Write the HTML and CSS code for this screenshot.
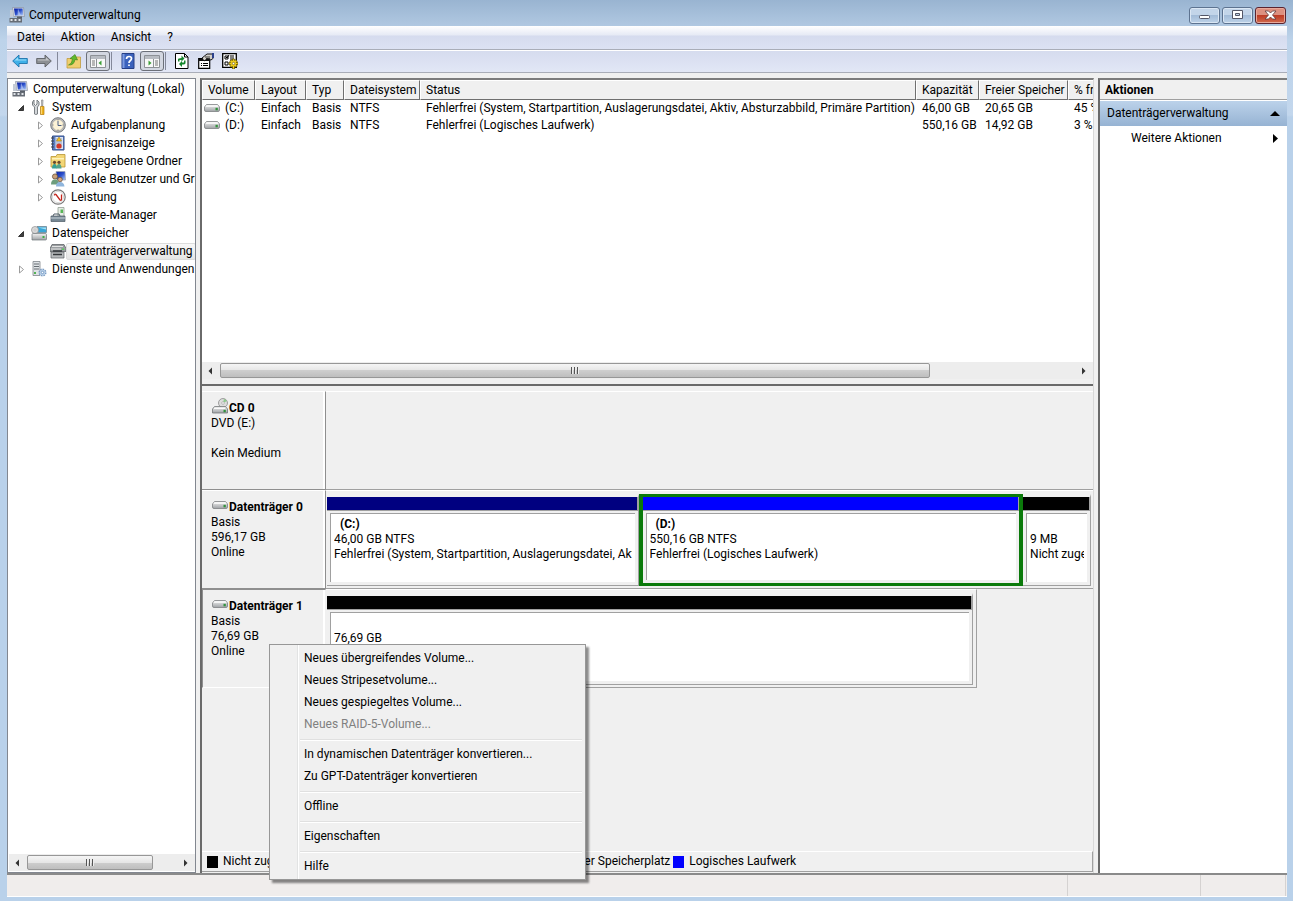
FILE: index.html
```html
<!DOCTYPE html>
<html lang="de">
<head>
    <meta charset="UTF-8">
    <meta name="viewport" content="width=device-width, initial-scale=1.0">
    <title>Computerverwaltung</title>
    <link rel="stylesheet" href="styles.css">
</head>
<body>
    <svg class="sprite" aria-hidden="true">
        <defs>
            <linearGradient id="gDisk" x1="0" y1="0" x2="0" y2="1">
                <stop offset="0" stop-color="#f2f2f2"/>
                <stop offset="1" stop-color="#9fa2a5"/>
            </linearGradient>
            <linearGradient id="gScreen" x1="0" y1="0" x2="1" y2="1">
                <stop offset="0" stop-color="#0a1fa0"/>
                <stop offset=".5" stop-color="#2c50cc"/>
                <stop offset="1" stop-color="#b9d4fa"/>
            </linearGradient>
        </defs>
        <symbol id="computer" viewBox="0 0 16 16">
            <path d="M3.500.5h11l1 9h-11z" fill="#d5dae3" stroke="#8b93a5" stroke-width=".7"/>
            <path d="M5 1.500h8.500l.8 7H6z" fill="url(#gScreen)"/>
            <path d="M9 1.500l3 7H8.500z" fill="#e4eeff" opacity=".5"/>
            <path d="M1 3h2.500l1 7H1z" fill="#c4cbd5"/>
            <path d="M.5 11h12.500v4.500H.5z" fill="#666c75"/>
            <path d="M1.500 12h2v2h-2zM5.500 12h2v2h-2zM9.500 12h2v2h-2z" fill="#dfe3e8"/>
            <path d="M8 9.500h5v1.500H8z" fill="#59606a"/>
        </symbol>
        <symbol id="tools" viewBox="0 0 16 16">
            <path d="M3 1v4l1.500 1.500L6 5V1l2 2v3L6.500 8v7q-2 1-3 0V8L1.500 6V3z" fill="#d4d7da" stroke="#6e7478" stroke-width=".9"/>
            <path d="M10.500 1h1.500l-.3 6h-1z" fill="#d0d0d0" stroke="#777" stroke-width=".6"/>
            <path d="M9.500 7.500h3.500v8H9.500z" fill="#f0b41c" stroke="#b37a0c" stroke-width=".7"/>
            <path d="M10.500 8v7" stroke="#ffe08a" stroke-width=".8"/>
        </symbol>
        <symbol id="clock" viewBox="0 0 16 16">
            <circle cx="8" cy="8" r="7.300" fill="#b9bbbe" stroke="#6d7073" stroke-width=".9"/>
            <circle cx="8" cy="8" r="5.600" fill="#fdf3d6" stroke="#8b8b8b" stroke-width=".4"/>
            <path d="M8 4v4.500h3.500" fill="none" stroke="#4a5f86" stroke-width="1"/>
            <path d="M8 2.500v1M8 12.500v1M2.500 8h1M12.500 8h1" stroke="#777"/>
        </symbol>
        <symbol id="events" viewBox="0 0 16 16">
            <path d="M2.500 1h11.500v14H2.500z" fill="#5b7fc4" stroke="#35508c"/>
            <path d="M5.500 2h7.500v12H5.500z" fill="#dfe6f5"/>
            <path d="M1 3h3M1 6h3M1 9h3M1 12h3" stroke="#444"/>
            <path d="M6 4h6M6 6h6M6 8h6M6 10h6M6 12h6" stroke="#8793a8" stroke-width=".8"/>
            <path d="M9 2l2.500 4h-5z" fill="#f2c227" stroke="#97700c" stroke-width=".5"/>
            <circle cx="9" cy="11" r="2.600" fill="#d43727"/>
        </symbol>
        <symbol id="folder" viewBox="0 0 16 16">
            <path d="M1 3.500h5l1-2h8v12.500H1z" fill="#f3d675" stroke="#b99534" stroke-width=".8"/>
            <path d="M2 5h12v1.500H2z" fill="#fff3bb"/>
            <circle cx="4.500" cy="9.300" r="1.600" fill="#6b4b2d"/>
            <circle cx="9" cy="9.300" r="1.600" fill="#6b4b2d"/>
            <path d="M2 15.500q0-4.500 2.500-4.500t2.500 4.500z" fill="#35a095"/>
            <path d="M6.500 15.500q0-4.500 2.500-4.500t2.500 4.500z" fill="#53a48b"/>
        </symbol>
        <symbol id="users" viewBox="0 0 16 16">
            <path d="M6 .5h9l.5 8.500H7z" fill="url(#gScreen)" stroke="#9ba2b0" stroke-width=".7"/>
            <circle cx="5" cy="5.500" r="2.600" fill="#c9a078" stroke="#5c4630" stroke-width=".7"/>
            <circle cx="10" cy="8.500" r="2.300" fill="#d5a57e" stroke="#5c4630" stroke-width=".7"/>
            <path d="M1 13.500q0-5 4-5t4 5z" fill="#6d9d7c"/>
            <path d="M6 15.500q0-4.500 4-4.500t4.500 4.500z" fill="#8fb5dc"/>
        </symbol>
        <symbol id="perf" viewBox="0 0 16 16">
            <circle cx="8" cy="8" r="7.200" fill="#fff" stroke="#777" stroke-width="1.200"/>
            <circle cx="8" cy="8" r="5.600" fill="#fff" stroke="#c0c0c0" stroke-width=".6"/>
            <path d="M4.500 6.500q0-2 1.500-1l4 5.500q1.500 1 1.500-1V5.500" fill="none" stroke="#c4251c" stroke-width="1.300"/>
        </symbol>
        <symbol id="devices" viewBox="0 0 16 16">
            <path d="M8 .5h6v9H8z" fill="#e5ece5" stroke="#93a093" stroke-width=".8"/>
            <path d="M10.500 2.500H13V6h-2.500z" fill="#58b657"/>
            <path d="M1 9h14v5.500H1z" fill="#778894" stroke="#4d5a64" stroke-width=".7"/>
            <path d="M3 9l1-2h5l1 2" fill="none" stroke="#4d5a64"/>
            <path d="M1 11h14" stroke="#c8d2d9"/>
        </symbol>
        <symbol id="storage" viewBox="0 0 16 16">
            <path d="M6 1.500h9.500v6H6z" fill="#39a6d8" stroke="#6d7d88" stroke-width=".7"/>
            <path d="M7 2.500h8v2z" fill="#a5e0f4"/>
            <circle cx="4" cy="5" r="3.500" fill="#dcdcdc" stroke="#8b8b8b" stroke-width=".7"/>
            <circle cx="4" cy="5" r="1" fill="#fff" stroke="#999" stroke-width=".5"/>
            <path d="M1 9.500q0-1 1-1h12q1.500 0 1.500 1v4.500q0 1-1 1H1z" fill="url(#gDisk)" stroke="#6f7579" stroke-width=".7"/>
            <path d="M11.500 11h2v2h-2z" fill="#3fae49"/>
        </symbol>
        <symbol id="diskmgmt" viewBox="0 0 16 16">
            <path d="M2 1.500h12l2 4v3H0v-3z" fill="#9a9ea1" stroke="#55595c" stroke-width=".7"/>
            <path d="M2 3.500h11M1 6h10" stroke="#e3e3e3"/>
            <path d="M1 9h13v6H1z" fill="#b8bbbd" stroke="#5a5e61" stroke-width=".7"/>
            <path d="M3 8h9M3 11.500h9" stroke="#35393c" stroke-width="1.500"/>
            <path d="M12 5.500h2v1.500h-2z" fill="#54d05a"/>
        </symbol>
        <symbol id="services" viewBox="0 0 16 16">
            <path d="M2 .5h7v14H2z" fill="#dfe3e6" stroke="#80878c" stroke-width=".8"/>
            <path d="M3 3h5M3 5.500h5M3 8h5" stroke="#666d73"/>
            <path d="M3 11h2v2H3z" fill="#53b255"/>
            <circle cx="11.500" cy="11.500" r="3" fill="#cfe0f3" stroke="#7b9dc4" stroke-width="2" stroke-dasharray="1.500 .8"/>
            <circle cx="11.500" cy="11.500" r="2.600" fill="#b9d0e8"/>
            <circle cx="11.500" cy="11.500" r="1.200" fill="#fff" stroke="#5583b8" stroke-width=".7"/>
        </symbol>
        <symbol id="drive" viewBox="0 0 16 8">
            <path d="M2.500.5h11l2 2.500v3q0 1.500-1.500 1.500H2Q.5 7.500.5 6V3z" fill="url(#gDisk)" stroke="#7d8083" stroke-width=".8"/>
            <path d="M2.800 1h10.400l1.500 2H1.300z" fill="#f5f5f5"/>
            <path d="M11.500 3.800h2.300v2.500h-2.300z" fill="#31923c"/>
        </symbol>
        <symbol id="cd" viewBox="0 0 16 16">
            <circle cx="11" cy="5" r="4.500" fill="#dcdcdc" stroke="#8c8c8c" stroke-width=".8"/>
            <path d="M11 5l1-4.300 3 2.300z" fill="#8ccb8b"/>
            <circle cx="11" cy="5" r="1.300" fill="#fff" stroke="#999" stroke-width=".6"/>
            <path d="M2.500 8.500h11l2 2.500v4H.5v-4z" fill="url(#gDisk)" stroke="#747779" stroke-width=".8"/>
            <path d="M2 10h11v1H2z" fill="#fafafa"/>
            <path d="M11.500 11.800h2.300v2.400h-2.300z" fill="#31923c"/>
        </symbol>
        <symbol id="back" viewBox="0 0 16 16">
            <path d="M.7 8L7 2v3.500h8.300v5H7V14z" fill="#3fb0e8" stroke="#1d74ad" stroke-width=".9"/>
            <path d="M2.500 7.600L6 4.200v2.300h8.300v1.100z" fill="#9adcf8"/>
        </symbol>
        <symbol id="forward" viewBox="0 0 16 16">
            <path d="M15.300 8L9 2v3.500H.7v5H9V14z" fill="#8c8f93" stroke="#5e6165" stroke-width=".9"/>
            <path d="M13.500 7.600L10 4.200v2.300H1.700v1.100z" fill="#c3c5c8"/>
        </symbol>
        <symbol id="up" viewBox="0 0 16 16">
            <path d="M1 5.500h5l1-1.500h7.500v11H1z" fill="#f0cf6e" stroke="#c09c40" stroke-width=".8"/>
            <path d="M2.500 12q3.500-1 4-6L4 5.500 9 1.500 11.500 7 9 6.500q-1 6-6.500 5.500z" fill="#5fb92e" stroke="#3b7c16" stroke-width=".6"/>
        </symbol>
        <symbol id="paneleft" viewBox="0 0 16 16">
            <path d="M.5 2.500h15v12H.5z" fill="#f8f8f8" stroke="#8d9196"/>
            <path d="M1 3h14v3H1z" fill="#b8bcc2"/>
            <path d="M6.500 6v8" stroke="#8d9196"/>
            <path d="M2 8h3M2 10h3M2 12h3" stroke="#777"/>
            <path d="M11.500 7.500v5L8.500 10z" fill="#3c9f37"/>
        </symbol>
        <symbol id="paneright" viewBox="0 0 16 16">
            <path d="M.5 2.500h15v12H.5z" fill="#f8f8f8" stroke="#8d9196"/>
            <path d="M1 3h14v3H1z" fill="#b8bcc2"/>
            <path d="M9.500 6v8" stroke="#8d9196"/>
            <path d="M11 8h3M11 10h3M11 12h3" stroke="#777"/>
            <path d="M4.500 7.500v5l3-2.500z" fill="#3c9f37"/>
        </symbol>
        <symbol id="help" viewBox="0 0 16 16">
            <path d="M2 .5h12v15H2z" fill="#3b62bd" stroke="#263f86"/>
            <path d="M2.500 1h2v14h-2z" fill="#7d9be0"/>
            <path d="M6.500 6q0-2.500 2.500-2.500t2.500 2q0 1.300-1.300 2.200Q9 8.500 9 10M9 11.500v1.500" fill="none" stroke="#fff" stroke-width="1.700"/>
        </symbol>
        <symbol id="refresh" viewBox="0 0 16 16">
            <path d="M1.500 .5h9L14 4v11.500H1.500z" fill="#fff" stroke="#000"/>
            <path d="M10.500.5V4H14" fill="none" stroke="#000"/>
            <path d="M4 8.500V6.500Q4 5 7.500 5V2.500l3 3-3 3V7H5.500v1.500zM11.500 7.500V10q0 1.500-3.500 1.500v2.500l-3-3 3-3V9.500h2v-2z" fill="#14862c"/>
        </symbol>
        <symbol id="props" viewBox="0 0 16 16">
            <path d="M.7 5.500h11v9.800H.7z" fill="#fff" stroke="#000" stroke-width="1.200"/>
            <path d="M1 6h10v2H1z" fill="#111"/>
            <path d="M3 10.500h1M3 12.500h1M5 10.500h5M5 12.500h5" stroke="#000"/>
            <path d="M4 5l5-4h6.500v4L13 7l-4-1-3 2z" fill="#d3d0ca" stroke="#000" stroke-width=".9"/>
            <path d="M7 4h5M8 5.500h4" stroke="#000" stroke-width=".7"/>
            <path d="M14 0h2v5h-2z" fill="#2c418c"/>
        </symbol>
        <symbol id="settings" viewBox="0 0 16 16">
            <path d="M.7.7h13.600v13.600H.7z" fill="#fff" stroke="#000" stroke-width="1.300"/>
            <path d="M3 3h3v3H3zM3 9h3v3H3z" fill="#fff" stroke="#000"/>
            <path d="M8 3h4M8 5h4M8 7h3M4 4l1 1 2-3" stroke="#000" fill="none"/>
            <path d="M10.500 6h2v1.500l1.500-.7 1.200 1.500-1 1.200h1.800v2h-1.800l1 1.500-1.200 1.200-1.500-.8V16h-2v-2.600l-1.500.8L7.800 13l1-1.500H7v-2h1.800l-1-1.200L9 6.800l1.500.7z" fill="#f0cf1c" stroke="#5c4e00" stroke-width=".7"/>
            <circle cx="11.500" cy="10.500" r="1.200" fill="#fff" stroke="#5c4e00" stroke-width=".6"/>
        </symbol>
        <symbol id="closed" viewBox="0 0 10 10">
            <path d="M2.500 2v7l4-3.500z" fill="#fff" stroke="#9b9b9b"/>
        </symbol>
        <symbol id="open" viewBox="0 0 10 10">
            <path d="M6.500 3.500v5H1.500z" fill="#404040" stroke="#1c1c1c" stroke-width=".8"/>
        </symbol>
        <symbol id="tri-left" viewBox="0 0 8 8"><path d="M5 .5v7L1.500 4z" fill="#333"/></symbol>
        <symbol id="tri-right" viewBox="0 0 8 8"><path d="M2 .5v7L5.500 4z" fill="#333"/></symbol>
    </svg>

    <div class="window">
        <header class="titlebar">
            <svg class="icon"><use href="#computer"/></svg>
            <h1>Computerverwaltung</h1>
            <div class="window-buttons">
                <button type="button" aria-label="Minimieren"><svg viewBox="0 0 28 14"><rect x="9.500" y="7.500" width="10" height="3" rx="1" fill="#fff" stroke="#535666"/></svg></button>
                <button type="button" aria-label="Maximieren"><svg viewBox="0 0 28 14"><path d="M9.500 2.500h10v8h-10zM12.500 5.500h4v2h-4z" fill="#fff" fill-rule="evenodd" stroke="#535666"/></svg></button>
                <button type="button" class="close" aria-label="Schließen"><svg viewBox="0 0 28 14"><path d="M9 3h3.500L14.500 5l2-2H20l-3.500 4 3.500 4h-3.500l-2-2-2 2H9l3.500-4z" fill="#fff" stroke="#5c3a3c" stroke-width=".8"/></svg></button>
            </div>
        </header>

        <nav class="menubar">
            <button type="button">Datei</button>
            <button type="button">Aktion</button>
            <button type="button">Ansicht</button>
            <button type="button">?</button>
        </nav>

        <div class="toolbar">
            <button type="button" aria-label="Zurück"><svg class="icon"><use href="#back"/></svg></button>
            <button type="button" aria-label="Vorwärts"><svg class="icon"><use href="#forward"/></svg></button>
            <span class="divider"></span>
            <button type="button" aria-label="Eine Ebene nach oben"><svg class="icon"><use href="#up"/></svg></button>
            <button type="button" class="pressed" aria-label="Konsolenstruktur"><svg class="icon"><use href="#paneleft"/></svg></button>
            <span class="divider"></span>
            <button type="button" aria-label="Hilfe"><svg class="icon"><use href="#help"/></svg></button>
            <button type="button" class="pressed" aria-label="Aktionsbereich"><svg class="icon"><use href="#paneright"/></svg></button>
            <span class="divider"></span>
            <button type="button" aria-label="Aktualisieren"><svg class="icon"><use href="#refresh"/></svg></button>
            <button type="button" aria-label="Eigenschaften"><svg class="icon"><use href="#props"/></svg></button>
            <button type="button" aria-label="Einstellungen"><svg class="icon"><use href="#settings"/></svg></button>
        </div>

        <main class="content">
            <aside class="tree">
                <ul>
                    <li class="root"><svg class="icon"><use href="#computer"/></svg><a href="#">Computerverwaltung (Lokal)</a></li>
                    <li><svg class="expander"><use href="#open"/></svg><svg class="icon"><use href="#tools"/></svg><a href="#">System</a></li>
                    <li class="sub"><svg class="expander"><use href="#closed"/></svg><svg class="icon"><use href="#clock"/></svg><a href="#">Aufgabenplanung</a></li>
                    <li class="sub"><svg class="expander"><use href="#closed"/></svg><svg class="icon"><use href="#events"/></svg><a href="#">Ereignisanzeige</a></li>
                    <li class="sub"><svg class="expander"><use href="#closed"/></svg><svg class="icon"><use href="#folder"/></svg><a href="#">Freigegebene Ordner</a></li>
                    <li class="sub"><svg class="expander"><use href="#closed"/></svg><svg class="icon"><use href="#users"/></svg><a href="#">Lokale Benutzer und Gruppen</a></li>
                    <li class="sub"><svg class="expander"><use href="#closed"/></svg><svg class="icon"><use href="#perf"/></svg><a href="#">Leistung</a></li>
                    <li class="sub"><span class="expander"></span><svg class="icon"><use href="#devices"/></svg><a href="#">Geräte-Manager</a></li>
                    <li><svg class="expander"><use href="#open"/></svg><svg class="icon"><use href="#storage"/></svg><a href="#">Datenspeicher</a></li>
                    <li class="sub selected"><span class="expander"></span><svg class="icon"><use href="#diskmgmt"/></svg><a href="#">Datenträgerverwaltung</a></li>
                    <li><svg class="expander"><use href="#closed"/></svg><svg class="icon"><use href="#services"/></svg><a href="#">Dienste und Anwendungen</a></li>
                </ul>
                <div class="scrollbar">
                    <button type="button" aria-label="Nach links"><svg><use href="#tri-left"/></svg></button>
                    <div class="track"><div class="thumb" style="width: 84%"></div></div>
                    <button type="button" aria-label="Nach rechts"><svg><use href="#tri-right"/></svg></button>
                </div>
            </aside>

            <section class="center">
                <div class="volumes">
                    <div class="table-wrap">
                        <table>
                            <colgroup>
                                <col class="c-volume"><col class="c-layout"><col class="c-type"><col class="c-fs">
                                <col class="c-status"><col class="c-size"><col class="c-free"><col class="c-percent">
                            </colgroup>
                            <thead>
                                <tr>
                                    <th>Volume</th>
                                    <th>Layout</th>
                                    <th>Typ</th>
                                    <th>Dateisystem</th>
                                    <th>Status</th>
                                    <th>Kapazität</th>
                                    <th>Freier Speicher</th>
                                    <th>% frei</th>
                                </tr>
                            </thead>
                            <tbody>
                                <tr>
                                    <td><svg class="drive"><use href="#drive"/></svg>(C:)</td>
                                    <td>Einfach</td>
                                    <td>Basis</td>
                                    <td>NTFS</td>
                                    <td>Fehlerfrei (System, Startpartition, Auslagerungsdatei, Aktiv, Absturzabbild, Primäre Partition)</td>
                                    <td>46,00 GB</td>
                                    <td>20,65 GB</td>
                                    <td>45 %</td>
                                </tr>
                                <tr>
                                    <td><svg class="drive"><use href="#drive"/></svg>(D:)</td>
                                    <td>Einfach</td>
                                    <td>Basis</td>
                                    <td>NTFS</td>
                                    <td>Fehlerfrei (Logisches Laufwerk)</td>
                                    <td>550,16 GB</td>
                                    <td>14,92 GB</td>
                                    <td>3 %</td>
                                </tr>
                            </tbody>
                        </table>
                    </div>
                    <div class="scrollbar">
                        <button type="button" aria-label="Nach links"><svg><use href="#tri-left"/></svg></button>
                        <div class="track"><div class="thumb" style="width: 83%"></div></div>
                        <button type="button" aria-label="Nach rechts"><svg><use href="#tri-right"/></svg></button>
                    </div>
                </div>

                <div class="disks">
                    <div class="disk">
                        <div class="disk-label">
                            <h2><svg class="icon"><use href="#cd"/></svg>CD 0</h2>
                            <p>DVD (E:)</p>
                            <p class="spaced">Kein Medium</p>
                        </div>
                        <div class="disk-graph"></div>
                    </div>

                    <div class="disk">
                        <div class="disk-label">
                            <h2><svg class="drive"><use href="#drive"/></svg>Datenträger 0</h2>
                            <p>Basis</p>
                            <p>596,17 GB</p>
                            <p>Online</p>
                        </div>
                        <div class="disk-graph">
                            <div class="volume primary" style="flex-grow: 311">
                                <div class="cap"></div>
                                <div class="info"><b>(C:)</b><p>46,00 GB NTFS</p><p>Fehlerfrei (System, Startpartition, Auslagerungsdatei, Aktiv</p></div>
                            </div>
                            <div class="volume logical" style="flex-grow: 377">
                                <div class="cap"></div>
                                <div class="info"><b>(D:)</b><p>550,16 GB NTFS</p><p>Fehlerfrei (Logisches Laufwerk)</p></div>
                            </div>
                            <div class="volume free" style="flex-grow: 67">
                                <div class="cap"></div>
                                <div class="info"><b></b><p>9 MB</p><p>Nicht zugeordnet</p></div>
                            </div>
                        </div>
                    </div>

                    <div class="disk active">
                        <div class="disk-label">
                            <h2><svg class="drive"><use href="#drive"/></svg>Datenträger 1</h2>
                            <p>Basis</p>
                            <p>76,69 GB</p>
                            <p>Online</p>
                        </div>
                        <div class="disk-graph short">
                            <div class="volume free" style="flex-grow: 1">
                                <div class="cap"></div>
                                <div class="info"><b></b><p>76,69 GB</p></div>
                            </div>
                        </div>

                        <div class="context-menu" role="menu">
                            <button type="button" role="menuitem">Neues übergreifendes Volume...</button>
                            <button type="button" role="menuitem">Neues Stripesetvolume...</button>
                            <button type="button" role="menuitem">Neues gespiegeltes Volume...</button>
                            <button type="button" role="menuitem" disabled>Neues RAID-5-Volume...</button>
                            <hr>
                            <button type="button" role="menuitem">In dynamischen Datenträger konvertieren...</button>
                            <button type="button" role="menuitem">Zu GPT-Datenträger konvertieren</button>
                            <hr>
                            <button type="button" role="menuitem">Offline</button>
                            <hr>
                            <button type="button" role="menuitem">Eigenschaften</button>
                            <hr>
                            <button type="button" role="menuitem">Hilfe</button>
                        </div>
                    </div>

                    <ul class="legend">
                        <li class="l-free">Nicht zugeordnet</li>
                        <li class="l-primary">Primäre Partition</li>
                        <li class="l-extended">Erweiterte Partition</li>
                        <li class="l-space">Freier Speicherplatz</li>
                        <li class="l-logical">Logisches Laufwerk</li>
                    </ul>
                </div>
            </section>

            <aside class="actions">
                <h2>Aktionen</h2>
                <button type="button" class="group">Datenträgerverwaltung<svg viewBox="0 0 10 10"><path d="M0 7h10L5 2z"/></svg></button>
                <button type="button" class="more">Weitere Aktionen<svg viewBox="0 0 10 10"><path d="M3 0v9l5-4.500z"/></svg></button>
            </aside>
        </main>

        <footer class="statusbar"><span></span><span></span><span></span></footer>
    </div>
</body>
</html>
```
FILE: styles.css
```css
* {
    box-sizing: border-box;
}
body {
    margin: 0;
    font-family: "Segoe UI", Roboto, "Open Sans", sans-serif;
    font-size: 12px;
    line-height: 15px;
    color: #000;
}
h1, h2, p, ul {
    margin: 0;
    padding: 0;
    list-style: none;
    font-size: 12px;
}
h1 {
    font-weight: normal;
}
button {
    font: inherit;
    color: inherit;
    margin: 0;
    padding: 0;
    border: none;
    background: none;
}
a {
    color: inherit;
    text-decoration: none;
}
.sprite {
    position: absolute;
    width: 0;
    height: 0;
}
.icon {
    width: 16px;
    height: 16px;
    flex: none;
}
.drive {
    width: 16px;
    height: 8px;
    flex: none;
}

.window {
    height: 100vh;
    display: flex;
    flex-direction: column;
    padding: 0 6px 4px 7px;
    background: linear-gradient(#99b4d1 0, #bdd3ea 40px, #c3d7ed 115px, #b9d1ea 117px);
}

/* Titel, Menü, Symbolleiste */
.titlebar {
    height: 26px;
    display: flex;
    align-items: center;
    gap: 4px;
    padding: 4px 1px 0 2px;
}
.window-buttons {
    display: flex;
    gap: 2px;
    margin-left: auto;
}
.window-buttons button {
    width: 31px;
    height: 17px;
    border: 1px solid #5d7390;
    border-radius: 3px;
    box-shadow: inset 0 0 0 1px #dbe7f4;
    background: linear-gradient(#c3d5e9 50%, #a3bcd8 50%, #bdd2e8);
}
.window-buttons svg {
    display: block;
    width: 28px;
    height: 14px;
}
.window-buttons .close {
    border-color: #5a2430;
    box-shadow: inset 0 0 0 1px #e8a99b;
    background: linear-gradient(#dc9080 50%, #bd3b25 50%, #d0694c);
}
.menubar {
    height: 23px;
    display: flex;
    padding-left: 3px;
    background: linear-gradient(#fff 0, #e6eaf5 9px, #d5dbee 10px, #dce2f3);
}
.menubar button {
    padding: 0 7px;
    margin-right: 2px;
}
.toolbar {
    height: 24px;
    display: flex;
    align-items: center;
    padding-left: 1px;
    border-top: 1px solid #a9adb8;
    border-bottom: 1px solid #a9adb8;
    box-shadow: inset 0 1px #fff;
    background: linear-gradient(#d5dbee, #e2e7f6);
}
.toolbar button {
    width: 24px;
    height: 20px;
    display: flex;
    align-items: center;
    justify-content: center;
}
.toolbar .pressed {
    border: 1px solid #6c7079;
    border-radius: 3px;
    background: #d3d7e1;
}
.toolbar .divider {
    width: 1px;
    height: 18px;
    margin: 0 4px 0 1px;
    background: #84899a;
}

/* Drei Bereiche */
.content {
    flex: 1;
    min-height: 0;
    display: grid;
    grid-template-columns: 189px minmax(0, 1fr) 189px;
    gap: 4px;
    padding-top: 5px;
    background: #f0f0f0;
}
.tree {
    display: flex;
    flex-direction: column;
    min-width: 0;
    padding: 1px 0 1px 1px;
    border: 1px solid #828790;
    background: #fff;
}
.tree ul {
    flex: 1;
    overflow: hidden;
}
.tree li {
    height: 18px;
    display: flex;
    align-items: center;
    padding-left: 8px;
    white-space: nowrap;
}
.tree .root {
    padding-left: 3px;
}
.tree .sub {
    padding-left: 27px;
}
.tree .expander {
    width: 10px;
    height: 10px;
    flex: none;
    margin-right: 4px;
}
.tree a {
    padding: 1px 3px 1px 5px;
}
.tree .selected a {
    border: 1px solid #dcdcdc;
    border-radius: 2px;
    padding: 0 2px 0 4px;
    background: linear-gradient(#f8f8f8, #e5e5e5);
}
.scrollbar {
    height: 17px;
    display: flex;
    align-items: stretch;
    background: #ededed;
}
.scrollbar button {
    width: 18px;
    display: flex;
    align-items: center;
    justify-content: center;
}
.scrollbar button svg {
    width: 8px;
    height: 8px;
}
.track {
    flex: 1;
    display: flex;
    padding: 1px 0;
}
.thumb {
    display: flex;
    align-items: center;
    justify-content: center;
    border: 1px solid #979797;
    border-radius: 2px;
    background: linear-gradient(#f5f5f5, #e6e6e6 50%, #cecece 50%, #bebebe);
}
.thumb::before {
    content: "";
    width: 8px;
    height: 7px;
    background: repeating-linear-gradient(90deg, #555 0, #555 1px, #eee 1px, #eee 2px, transparent 2px, transparent 3px);
}

.center {
    display: flex;
    flex-direction: column;
    min-width: 0;
    border-left: 2px solid #6a6a6a;
    border-top: 2px solid #7c7c7c;
    border-right: 1px solid #d9d9d9;
}
.volumes {
    height: 306px;
    flex: none;
    display: flex;
    flex-direction: column;
    padding-bottom: 5px;
    border-bottom: 2px solid #6a6a6a;
}
.table-wrap {
    flex: 1;
    overflow: hidden;
    background: #fff;
}
table {
    table-layout: fixed;
    width: 931px;
    min-width: 100%;
    border-collapse: separate;
    border-spacing: 0;
}
.c-volume { width: 53px; }
.c-layout { width: 51px; }
.c-type { width: 38px; }
.c-fs { width: 76px; }
.c-status { width: 496px; }
.c-size { width: 63px; }
.c-free { width: 89px; }
.c-percent { width: 65px; }
th, td {
    height: 17px;
    padding: 0 0 0 6px;
    text-align: left;
    font-weight: normal;
    white-space: nowrap;
    overflow: hidden;
}
th {
    height: 20px;
    padding-left: 5px;
    border: 1px solid #fff;
    border-right-color: #6f6f6f;
    border-bottom-color: #6f6f6f;
    background: #f0f0f0;
}
td:first-child {
    padding-left: 2px;
}
td .drive {
    margin-right: 5px;
}

/* Datenträgeransicht */
.disks {
    flex: 1;
    display: flex;
    flex-direction: column;
    padding-top: 5px;
}
.disk {
    position: relative;
    height: 99px;
    display: flex;
}
.disk-label {
    width: 124px;
    flex: none;
    padding: 9px 0 0 9px;
    border-top: 1px solid #fff;
    border-right: 1px solid #8f8f8f;
    border-bottom: 1px solid #8f8f8f;
    box-shadow: inset -2px 0 #fff;
}
.disk-label h2 {
    display: flex;
    align-items: center;
    gap: 1px;
    height: 15px;
    padding-left: 1px;
}
.disk-label h2 svg {
    margin-bottom: 5px;
}
.disk-label .spaced {
    margin-top: 15px;
}
.disk-graph {
    flex: 1;
    min-width: 0;
    display: flex;
    padding: 3px 2px 2px 1px;
    border-top: 1px solid #fff;
    border-bottom: 1px solid #a0a0a0;
}
.disk-graph.short {
    flex: 0 1 651px;
    padding-right: 3px;
    border-right: 1px solid #a0a0a0;
}
.active .disk-label {
    border: 1px solid #8f8f8f;
    border-right-color: #f0f0f0;
    border-bottom-color: #fff;
    padding-left: 8px;
}
.volume {
    flex: 1 1 0;
    min-width: 0;
    display: flex;
    flex-direction: column;
    border-top: 3px solid #f0f0f0;
    border-right: 1px solid #a0a0a0;
    border-bottom: 1px solid #a0a0a0;
}
.cap {
    height: 14px;
    border-right: 1px solid #a0a0a0;
    border-bottom: 1px solid #a0a0a0;
}
.info {
    flex: 1;
    margin: 2px 3px 3px;
    padding: 3px 3px 0 3px;
    border-top: 1px solid #a0a0a0;
    border-left: 1px solid #a0a0a0;
    background: #fff;
    white-space: nowrap;
    overflow: hidden;
}
.info b {
    display: block;
    height: 15px;
    padding-left: 6px;
}
.info p {
    overflow: hidden;
}
.primary .cap {
    background: #000080;
}
.logical {
    border: 3px solid #0b7a0b;
    border-width: 3px 4px;
}
.logical .cap {
    background: #0000ff;
}
.free .cap {
    background: #000;
}
.legend {
    height: 21px;
    display: flex;
    align-items: center;
    margin-top: auto;
    margin-bottom: 1px;
    padding-left: 5px;
    gap: 3px;
    border: 1px solid #a0a0a0;
    border-top-color: #fff;
    border-left: none;
    white-space: nowrap;
}
.legend li {
    display: flex;
    align-items: center;
    gap: 5px;
}
.legend li::before {
    content: "";
    width: 11px;
    height: 12px;
    background: #000;
}
.legend .l-primary::before {
    background: #000080;
}
.legend .l-extended::before {
    background: #008000;
}
.legend .l-space::before {
    background: #00ff00;
}
.legend .l-logical::before {
    background: #0000ff;
}

.context-menu {
    position: absolute;
    left: 67px;
    top: 55px;
    z-index: 1;
    width: 317px;
    padding: 2px;
    border: 1px solid #979797;
    background: linear-gradient(90deg, #f0f0f0 27px, #e2e3e3 27px, #e2e3e3 28px, #fff 28px, #fff 29px, #f0f0f0 29px);
    box-shadow: 3px 3px 2px rgba(0, 0, 0, 0.45);
}
.context-menu button {
    display: block;
    width: 100%;
    height: 22px;
    padding-left: 32px;
    text-align: left;
}
.context-menu button:hover {
    background: #dce8f5;
}
.context-menu button:disabled {
    color: #808080;
}
.context-menu hr {
    height: 2px;
    margin: 4px 1px 2px 28px;
    border: none;
    border-top: 1px solid #e0e0e0;
    border-bottom: 1px solid #fff;
}

/* Aktionsbereich */
.actions {
    border-left: 2px solid #6a6a6a;
    border-top: 2px solid #7c7c7c;
    background: #fff;
}
.actions h2 {
    height: 20px;
    padding: 3px 0 0 5px;
    border-bottom: 1px solid #a0a0a0;
    background: #f0f0f0;
}
.actions button {
    width: 100%;
    height: 25px;
    display: flex;
    align-items: center;
    justify-content: space-between;
    padding: 0 7px;
}
.actions svg {
    width: 10px;
    height: 10px;
}
.actions .group {
    margin-top: 1px;
    background: linear-gradient(#bcd2ea, #96b3d3);
}
.actions .more {
    padding-left: 31px;
}

.statusbar {
    height: 24px;
    display: flex;
    justify-content: flex-end;
    border-top: 2px solid #8a8a8a;
    border-bottom: 1px solid #fff;
    background: #f0edec;
}
.statusbar span {
    width: 133px;
    border-left: 1px solid #d5d2d1;
}
.statusbar span:nth-child(2) {
    width: 85px;
}
.statusbar span:last-child {
    width: 2px;
}
```
